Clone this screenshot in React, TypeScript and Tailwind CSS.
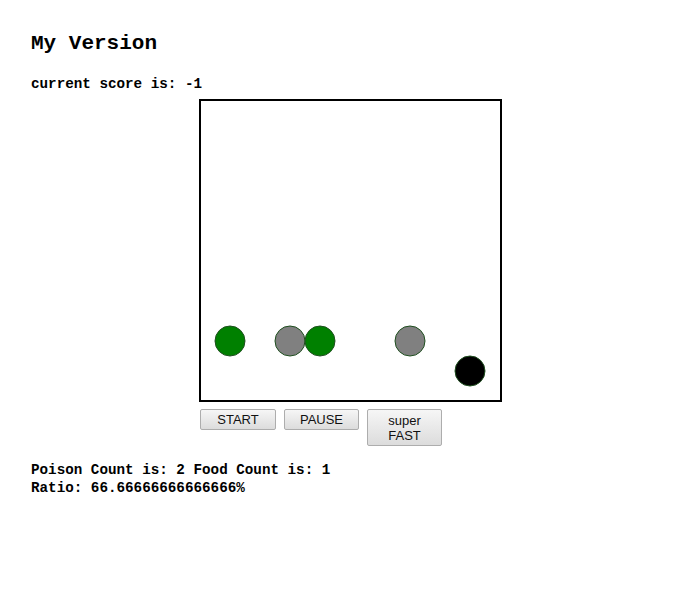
const circles = [
  { x: 29, y: 240, fill: "#008000" },
  { x: 89, y: 240, fill: "#808080" },
  { x: 119, y: 240, fill: "#008000" },
  { x: 209, y: 240, fill: "#808080" },
  { x: 269, y: 270, fill: "#000000" },
];

function Btn({ children, className = "" }: { children: React.ReactNode; className?: string }) {
  return (
    <button
      className={
        "w-[75px] rounded-[2px] border border-[#adadad] bg-gradient-to-b from-[#f6f6f6] to-[#dcdcdc] text-[13px] leading-[15px] text-[#111] [font-family:'Liberation_Sans',Arial,sans-serif] " +
        className
      }
    >
      {children}
    </button>
  );
}

export default function App() {
  return (
    <div className="min-h-[610px] bg-white px-[31px] pt-[32px] text-black [font-family:'Liberation_Mono','DejaVu_Sans_Mono',monospace]">
      <h1 className="text-[21px] font-bold leading-[24px]">My Version</h1>
      <div className="mt-[19px] text-[14.25px] font-bold leading-[18px]">current score is: -1</div>

      <div className="ml-[168px] mt-[6px] h-[303px] w-[303px] border-2 border-black">
        <svg width="299" height="299" viewBox="0 0 299 299">
          {circles.map((c, i) => (
            <circle key={i} cx={c.x} cy={c.y} r={15} fill={c.fill} stroke="#1f4f1f" strokeWidth={1} />
          ))}
        </svg>
      </div>

      <div className="ml-[169px] mt-[7px] flex items-start gap-[8px]">
        <Btn className="h-[21px] w-[76px]">START</Btn>
        <Btn className="h-[21px] w-[75px]">PAUSE</Btn>
        <Btn className="h-[37px] w-[75px] py-[3px]">
          super
          <br />
          FAST
        </Btn>
      </div>

      <div className="mt-[15px] text-[14.25px] font-bold leading-[18px]">
        <div>Poison Count is: 2 Food Count is: 1</div>
        <div>Ratio: 66.66666666666666%</div>
      </div>
    </div>
  );
}
